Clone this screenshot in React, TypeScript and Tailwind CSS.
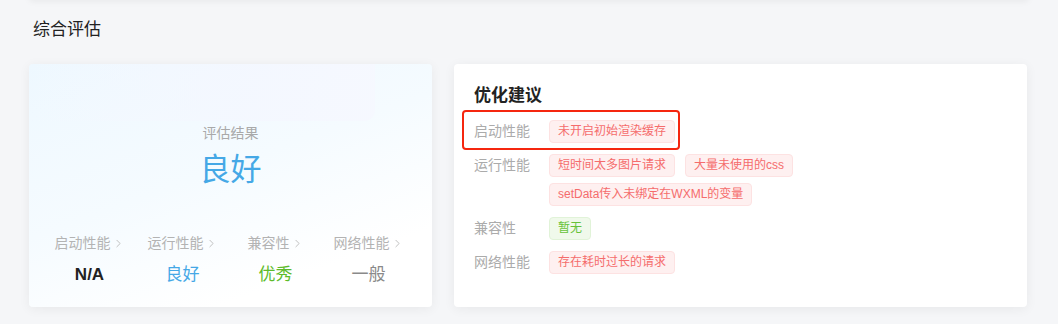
import { ChevronRight } from "lucide-react";

const metrics = [
  { label: "启动性能", value: "N/A", color: "text-[#222222] font-semibold" },
  { label: "运行性能", value: "良好", color: "text-[#45a8e6]" },
  { label: "兼容性", value: "优秀", color: "text-[#5dbb2b]" },
  { label: "网络性能", value: "一般", color: "text-[#8a8a8a]" },
];

const suggestions = [
  { label: "启动性能", tags: ["未开启初始渲染缓存"], ok: false, marked: true },
  {
    label: "运行性能",
    tags: ["短时间太多图片请求", "大量未使用的css", "setData传入未绑定在WXML的变量"],
    ok: false,
  },
  { label: "兼容性", tags: ["暂无"], ok: true },
  { label: "网络性能", tags: ["存在耗时过长的请求"], ok: false },
];

function Tag({ text, ok }: { text: string; ok: boolean }) {
  return (
    <span
      className={`inline-block h-[23px] rounded-[4px] border px-[8px] text-[12px] leading-[21px] ${
        ok
          ? "border-[#e1f3d8] bg-[#f0f9eb] text-[#67c23a]"
          : "border-[#fde2e2] bg-[#fef0f0] text-[#f56c6c]"
      }`}
    >
      {text}
    </span>
  );
}

export default function App() {
  return (
    <div className="min-h-[324px] overflow-hidden bg-[#f5f6f8] font-['Liberation_Sans','Noto_Sans_CJK_SC',sans-serif]">
      <div className="mx-[29px] -mt-[10px] h-[10px] rounded-[4px] bg-[#f3f4f6] shadow-[0_2px_6px_rgba(0,0,0,0.05)]" />
      <div className="pl-[29px] pr-[31px]">
        <h2 className="pl-[4px] pt-[18px] text-[17px] leading-[24px] text-[#222222]">综合评估</h2>
        <div className="mt-[22px] flex gap-[22px]">
          {/* left: overall result */}
          <div className="relative h-[243px] w-[403px] overflow-hidden rounded-[4px] bg-[linear-gradient(160deg,#eef8ff_0%,#f5fbff_45%,#ffffff_80%)] shadow-[0_2px_12px_rgba(0,0,0,0.06)]">
            <div className="absolute left-0 top-0 h-[57px] w-[346px] rounded-br-[10px] bg-[linear-gradient(90deg,rgba(240,249,255,0)_0%,rgba(244,247,255,0.8)_60%,rgba(246,248,255,0.9)_100%)]" />
            <div className="relative flex flex-col items-center pt-[59px]">
              <div className="text-[14px] leading-[20px] text-[#a9a9a9]">评估结果</div>
              <div className="mt-[7px] text-[31px] leading-[40px] text-[#45a8e6]">良好</div>
            </div>
            <div className="relative mt-[43px] grid grid-cols-4 pl-[14px] pr-[17px]">
              {metrics.map((m) => (
                <div key={m.label} className="flex flex-col items-center">
                  <div className="flex items-center text-[14px] leading-[20px] text-[#b3b3b3]">
                    {m.label}
                    <ChevronRight size={13} strokeWidth={1.5} className="ml-[1px]" />
                  </div>
                  <div className={`mt-[10px] text-[17px] leading-[24px] ${m.color}`}>{m.value}</div>
                </div>
              ))}
            </div>
          </div>

          {/* right: suggestions */}
          <div className="h-[243px] flex-1 rounded-[4px] bg-white px-[20px] pt-[20px] shadow-[0_2px_12px_rgba(0,0,0,0.06)]">
            <h3 className="text-[17px] font-semibold leading-[24px] text-[#222222]">优化建议</h3>
            <div className="mt-[12px] flex flex-col gap-[11px]">
              {suggestions.map((s) => (
                <div key={s.label} className="relative flex">
                  <div className="w-[75px] shrink-0 text-[14px] leading-[23px] text-[#ababab]">{s.label}</div>
                  <div className="flex max-w-[420px] flex-wrap gap-x-[10px] gap-y-[6px]">
                    {s.tags.map((t) => (
                      <Tag key={t} text={t} ok={s.ok} />
                    ))}
                  </div>
                  {s.marked && (
                    <div className="pointer-events-none absolute -left-[12px] -top-[10px] h-[40px] w-[218px] rounded-[4px] border-2 border-[#f5260f]" />
                  )}
                </div>
              ))}
            </div>
          </div>
        </div>
      </div>
    </div>
  );
}
